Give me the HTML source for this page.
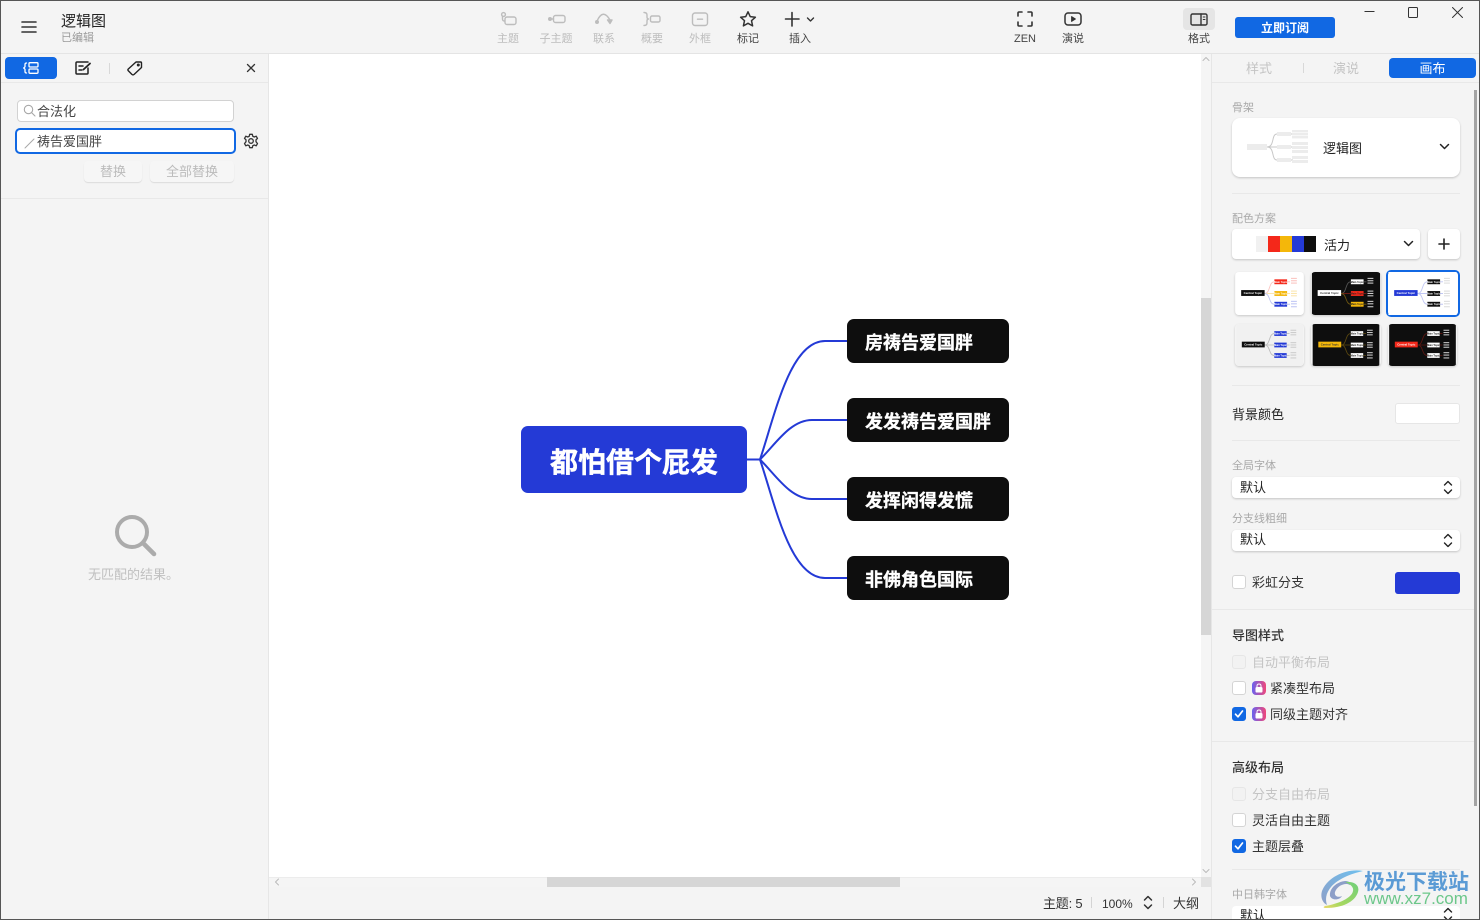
<!DOCTYPE html>
<html lang="zh"><head><meta charset="utf-8"><title>逻辑图</title>
<style>
html,body{margin:0;padding:0;width:1480px;height:920px;overflow:hidden;background:#f4f4f4}
body{position:relative;font-family:"Liberation Sans","Noto Sans CJK SC",sans-serif;color:#222}
.a,.t,svg.i{position:absolute}
.t{white-space:nowrap;line-height:16px;font-size:13px;margin-top:1px}
.tb{font-size:11px;color:#bdbdbd;width:50px;text-align:center;top:30px}
.dk{color:#444}
.lb{font-size:11px;color:#a8a8a8}
.hd{font-weight:500;color:#333}
.card{position:absolute;background:#fff;border-radius:4px;box-shadow:0 1px 2px rgba(0,0,0,.2)}
.ln{position:absolute;height:1px;background:#e8e8e8}
.cb{position:absolute;width:12px;height:12px;background:#fff;border:1px solid #d4d4d4;border-radius:3px}
.cb.off{background:#f2f2f2;border-color:#e6e6e6}
.cb.on{background:#1168e3;border-color:#1168e3}
.dis{color:#c4c4c4}
.node{position:absolute;background:#0e0e0e;color:#fff;border-radius:7px;height:44px;width:162px;font-weight:700;font-size:18px;line-height:48px;text-indent:18px;white-space:nowrap;overflow:hidden;-webkit-text-stroke:.3px #fff}
svg.i{fill:none;stroke-linecap:round;stroke-linejoin:round}
.g{stroke:#bdbdbd;stroke-width:1.4}
.d{stroke:#333;stroke-width:1.5}
.th{position:absolute;border-radius:4px;box-shadow:0 1px 2px rgba(0,0,0,.18);overflow:hidden}
.bl{filter:blur(.3px)}
</style></head><body>

<svg width="0" height="0" style="position:absolute">
<symbol id="tm" viewBox="0 0 70 44">
<rect width="70" height="44" style="fill:var(--bg)"/>
<g fill="none" stroke-width=".9" style="stroke:var(--l1)"><path d="M30 22C36 22 34 10 40 10M53 10H56"/></g>
<g fill="none" stroke-width=".9" style="stroke:var(--l2)"><path d="M30 22H40M53 22H56"/></g>
<g fill="none" stroke-width=".9" style="stroke:var(--l3)"><path d="M30 22C36 22 34 33 40 33M53 33H56"/></g>
<rect x="6" y="18.5" width="24" height="6" style="fill:var(--c)"/>
<text x="18" y="22.7" font-size="3" text-anchor="middle" font-family="Liberation Sans" font-weight="700" style="fill:var(--ct)">Central Topic</text>
<rect x="40" y="7.5" width="13" height="5" style="fill:var(--m1)"/>
<rect x="40" y="19.5" width="13" height="5" style="fill:var(--m2)"/>
<rect x="40" y="30.5" width="13" height="5" style="fill:var(--m3)"/>
<text x="46.5" y="11" font-size="2.6" text-anchor="middle" font-family="Liberation Sans" font-weight="700" style="fill:var(--mt)">Main Topic</text>
<text x="46.5" y="23" font-size="2.6" text-anchor="middle" font-family="Liberation Sans" font-weight="700" style="fill:var(--mt)">Main Topic</text>
<text x="46.5" y="34" font-size="2.6" text-anchor="middle" font-family="Liberation Sans" font-weight="700" style="fill:var(--mt)">Main Topic</text>
<g style="fill:var(--s1)"><rect x="57" y="6" width="6" height="1.1"/><rect x="57" y="8.4" width="6" height="1.1"/><rect x="57" y="10.8" width="6" height="1.1"/></g>
<g style="fill:var(--s2)"><rect x="57" y="19" width="6" height="1.1"/><rect x="57" y="21.4" width="6" height="1.1"/><rect x="57" y="23.8" width="6" height="1.1"/></g>
<g style="fill:var(--s3)"><rect x="57" y="29.5" width="6" height="1.1"/><rect x="57" y="32" width="6" height="1.1"/><rect x="57" y="35" width="6" height="1.1"/></g>
</symbol>
<linearGradient id="wb" x1="1" y1="0" x2="0" y2="1"><stop offset="0" stop-color="#6fc0ee"/><stop offset="1" stop-color="#8d9fc8"/></linearGradient>
<linearGradient id="wg" x1="1" y1="0" x2="0" y2="1"><stop offset="0" stop-color="#6fcf7a"/><stop offset=".7" stop-color="#a8d860"/><stop offset="1" stop-color="#ecd96a"/></linearGradient>
</svg>

<!-- top bar -->
<div class="a" style="left:0;top:53px;width:1480px;height:1px;background:#e4e4e4"></div>
<svg class="i" style="left:21px;top:20px" width="16" height="14" stroke="#333" stroke-width="1.6"><path d="M1 2H15M1 7H15M1 12H15"/></svg>
<div class="t" style="left:61px;top:12px;font-size:15px;line-height:18px;color:#222">逻辑图</div>
<div class="t" style="left:61px;top:29px;font-size:11px;color:#9a9a9a">已编辑</div>

<svg class="i g" style="left:498px;top:10px" width="20" height="18"><circle cx="5.5" cy="4.5" r="1.9"/><path d="M4.5 6.5V9Q4.5 11 6.5 11"/><rect x="7" y="7" width="11" height="7.5" rx="2"/></svg>
<div class="t tb" style="left:483px">主题</div>
<svg class="i g" style="left:546px;top:10px" width="22" height="18"><circle cx="4" cy="9" r="1.3" fill="#bdbdbd"/><path d="M5 9H7.5"/><rect x="7.5" y="5.5" width="11.5" height="7" rx="2"/></svg>
<div class="t tb" style="left:531px">子主题</div>
<svg class="i g" style="left:594px;top:10px" width="20" height="18"><circle cx="3" cy="12" r="1.3" fill="#bdbdbd"/><path d="M3 11Q9 -2 16 10"/><path d="M13.5 10H18L16 13.5Z" fill="#bdbdbd"/></svg>
<div class="t tb" style="left:579px">联系</div>
<svg class="i g" style="left:642px;top:10px" width="20" height="18"><path d="M2 2.5Q5 2.5 5 5V7Q5 9 6.5 9Q5 9 5 11V13Q5 15.5 2 15.5"/><rect x="8.5" y="6" width="9.5" height="6" rx="1.5"/></svg>
<div class="t tb" style="left:627px">概要</div>
<svg class="i g" style="left:691px;top:10px" width="18" height="18"><rect x="1.5" y="3" width="15" height="12.5" rx="2.5"/><path d="M6.5 9.2H11.5"/></svg>
<div class="t tb" style="left:675px">外框</div>
<svg class="i" style="left:739px;top:10px" width="18" height="18" stroke="#333" stroke-width="1.5"><path d="M9 1.8L11.2 6.6L16.4 7.2L12.5 10.7L13.6 15.9L9 13.3L4.4 15.9L5.5 10.7L1.6 7.2L6.8 6.6Z"/></svg>
<div class="t tb dk" style="left:723px">标记</div>
<svg class="i" style="left:784px;top:11px" width="32" height="16" stroke="#333" stroke-width="1.6"><path d="M8 1.5V15M1.5 8H15"/><path d="M23.5 7L26.5 10L29.5 7" stroke-width="1.4"/></svg>
<div class="t tb dk" style="left:775px">插入</div>

<svg class="i" style="left:1016px;top:10px" width="18" height="18" stroke="#333" stroke-width="1.6"><path d="M2 6V3Q2 2 3 2H6M12 2H15Q16 2 16 3V6M16 12V15Q16 16 15 16H12M6 16H3Q2 16 2 15V12"/></svg>
<div class="t tb dk" style="left:1000px">ZEN</div>
<svg class="i" style="left:1064px;top:11px" width="18" height="16" stroke="#333" stroke-width="1.5"><rect x="1" y="2" width="16" height="12" rx="3"/><path d="M7.5 5.5L11.5 8L7.5 10.5Z" fill="#333" stroke-width=".8"/></svg>
<div class="t tb dk" style="left:1048px">演说</div>
<div class="a" style="left:1183px;top:8px;width:32px;height:22px;background:#e5e5e5;border-radius:4px"></div>
<svg class="i" style="left:1190px;top:13px" width="18" height="13" stroke="#333" stroke-width="1.4"><rect x="1" y="1" width="16" height="11" rx="1.5"/><path d="M11 1V12"/><path d="M13.2 4H15M13.2 6.5H15" stroke-width="1"/></svg>
<div class="t tb dk" style="left:1174px">格式</div>
<div class="a" style="left:1235px;top:17px;width:100px;height:21px;background:#1168e3;border-radius:3px;color:#fff;font-size:12px;font-weight:700;text-align:center;line-height:23px;overflow:hidden">立即订阅</div>
<svg class="i" style="left:1360px;top:4px" width="110" height="16" stroke="#333" stroke-width="1"><path d="M4.5 7.5H14.5" stroke-linecap="butt"/><rect x="48.5" y="3.5" width="9" height="10" rx="1"/><path d="M92.5 3.5L102.5 13.5M102.5 3.5L92.5 13.5"/></svg>

<!-- left panel -->
<div class="a" style="left:268px;top:54px;width:1px;height:866px;background:#e6e6e6"></div>
<div class="ln" style="left:0;top:82px;width:268px"></div>
<div class="a" style="left:5px;top:57px;width:52px;height:22px;background:#1168e3;border-radius:4px"></div>
<svg class="i" style="left:22px;top:60px" width="18" height="16" stroke="#fff" stroke-width="1.3"><path d="M4.5 3Q3 3 3 4.5V6.8L1.7 8L3 9.2V11.5Q3 13 4.5 13"/><rect x="7" y="2.7" width="9" height="4.3" rx="1"/><rect x="7" y="9" width="9" height="4.3" rx="1"/></svg>
<svg class="i" style="left:74px;top:60px" width="18" height="16" stroke="#222" stroke-width="1.5"><path d="M14 8V13Q14 14 13 14H3Q2 14 2 13V3Q2 2 3 2H14"/><path d="M5 6H9M5 10H8"/><path d="M9.5 9.5L16 3.5" stroke-width="1.8"/></svg>
<div class="a" style="left:109px;top:63px;width:1px;height:11px;background:#d8d8d8"></div>
<svg class="i" style="left:126px;top:60px" width="17" height="16" stroke="#222" stroke-width="1.4"><path d="M10 2H14.5Q15.5 2 15.5 3V7.5L8 14.5Q7 15.3 6 14.5L2.3 10.8Q1.5 9.8 2.3 9Z"/><circle cx="12.3" cy="5" r=".8"/></svg>
<svg class="i" style="left:245px;top:62px" width="12" height="12" stroke="#333" stroke-width="1.3"><path d="M2.5 2.5L9.5 9.5M9.5 2.5L2.5 9.5"/></svg>

<div class="a" style="left:17px;top:100px;width:215px;height:20px;background:#fff;border:1px solid #d2d2d2;border-radius:4px"></div>
<svg class="i" style="left:23px;top:104px" width="14" height="14" stroke="#a8a8a8" stroke-width="1.1"><circle cx="5.5" cy="5.5" r="4.2"/><path d="M8.5 8.5L12 12"/></svg>
<div class="t" style="left:37px;top:103px;color:#444">合法化</div>
<div class="a" style="left:15px;top:128px;width:217px;height:22px;background:#fff;border:2px solid #1168e3;border-radius:5px"></div>
<svg class="i" style="left:24px;top:137px" width="12" height="12" stroke="#a8a8a8" stroke-width="1"><path d="M1 11L10 2"/></svg>
<div class="t" style="left:37px;top:133px;color:#444">祷告爱国胖</div>
<svg class="i" style="left:243px;top:133px" width="16" height="16" viewBox="0 0 16 16" stroke="#333" stroke-width="1.3"><path d="M6.7 1.3H9.3L9.8 3.3L11.3 4L13.2 3.2L14.5 5.4L13 6.8V8.7L14.5 10.6L13.2 12.8L11.3 12L9.8 12.7L9.3 14.7H6.7L6.2 12.7L4.7 12L2.8 12.8L1.5 10.6L3 8.7V6.8L1.5 5.4L2.8 3.2L4.7 4L6.2 3.3Z"/><circle cx="8" cy="8" r="2.3"/></svg>
<div class="card" style="left:84px;top:161px;width:58px;height:21px;background:#f6f6f6;box-shadow:0 1px 1px rgba(0,0,0,.1);color:#bbb;font-size:13px;text-align:center;line-height:21px">替换</div>
<div class="card" style="left:150px;top:161px;width:84px;height:21px;background:#f6f6f6;box-shadow:0 1px 1px rgba(0,0,0,.1);color:#bbb;font-size:13px;text-align:center;line-height:21px">全部替换</div>
<div class="ln" style="left:0;top:198px;width:268px"></div>
<svg class="i" style="left:113px;top:513px" width="44" height="44" stroke="#ababab" stroke-width="4"><circle cx="19" cy="19" r="15"/><path d="M30 30L41 41" stroke-width="4.6"/></svg>
<div class="t" style="left:88px;top:566px;font-size:13px;color:#c0c0c0">无匹配的结果。</div>

<!-- canvas -->
<div class="a" style="left:269px;top:54px;width:932px;height:823px;background:#fff"></div>
<svg class="a" style="left:269px;top:54px" width="932" height="823" fill="none" stroke="#243ad6" stroke-width="2">
<path d="M478 405.5H491M491 405.5C506 361 521 287 556 287H578"/>
<path d="M491 405.5C506 391 521 366 543 366H578"/>
<path d="M491 405.5C506 420 521 445 543 445H578"/>
<path d="M491 405.5C506 450 521 524 556 524H578"/>
</svg>
<div class="a" style="left:521px;top:426px;width:226px;height:67px;background:#243ad6;border-radius:7px;color:#fff;font-size:28px;font-weight:700;line-height:74px;text-align:center;white-space:nowrap;overflow:hidden;-webkit-text-stroke:.4px #fff">都怕借个屁发</div>
<div class="node" style="left:847px;top:319px">房祷告爱国胖</div>
<div class="node" style="left:847px;top:398px">发发祷告爱国胖</div>
<div class="node" style="left:847px;top:477px">发挥闲得发慌</div>
<div class="node" style="left:847px;top:556px">非佛角色国际</div>

<!-- scrollbars -->
<div class="a" style="left:1201px;top:54px;width:10px;height:833px;background:#f5f5f5"></div>
<div class="a" style="left:1201px;top:298px;width:10px;height:337px;background:#d6d6d6"></div>
<div class="a" style="left:269px;top:877px;width:932px;height:10px;background:#f5f5f5;box-shadow:inset 0 1px 0 #ececec"></div>
<div class="a" style="left:547px;top:877px;width:353px;height:10px;background:#d6d6d6"></div>
<div class="a" style="left:1201px;top:877px;width:10px;height:10px;background:#e2e2e2"></div>
<svg class="i" style="left:1202px;top:56px" width="8" height="6" stroke="#bbb" stroke-width="1"><path d="M1 4.5L4 1.5L7 4.5"/></svg>
<svg class="i" style="left:1202px;top:868px" width="8" height="6" stroke="#bbb" stroke-width="1"><path d="M1 1.5L4 4.5L7 1.5"/></svg>
<svg class="i" style="left:274px;top:878px" width="6" height="8" stroke="#bbb" stroke-width="1"><path d="M4.5 1L1.5 4L4.5 7"/></svg>
<svg class="i" style="left:1191px;top:878px" width="6" height="8" stroke="#bbb" stroke-width="1"><path d="M1.5 1L4.5 4L1.5 7"/></svg>

<!-- status bar -->
<div class="t" style="left:1043px;top:895px;font-size:13px;letter-spacing:-.2px;color:#333">主题: 5</div>
<div class="a" style="left:1091px;top:897px;width:1px;height:11px;background:#d4d4d4"></div>
<div class="t" style="left:1102px;top:895px;font-size:12px;color:#333">100%</div>
<svg class="i" style="left:1143px;top:894px" width="10" height="17" stroke="#333" stroke-width="1.5"><path d="M1.5 6L5 2.5L8.5 6M1.5 11L5 14.5L8.5 11"/></svg>
<div class="a" style="left:1163px;top:897px;width:1px;height:11px;background:#d4d4d4"></div>
<div class="t" style="left:1173px;top:895px;color:#333">大纲</div>

<!-- right panel -->
<div class="a" style="left:1211px;top:54px;width:1px;height:866px;background:#e6e6e6"></div>
<div class="ln" style="left:1212px;top:82px;width:268px"></div>
<div class="t" style="left:1246px;top:60px;color:#c4c4c4">样式</div>
<div class="a" style="left:1303px;top:63px;width:1px;height:10px;background:#d8d8d8"></div>
<div class="t" style="left:1333px;top:60px;color:#c4c4c4">演说</div>
<div class="a" style="left:1389px;top:58px;width:87px;height:20px;background:#1168e3;border-radius:4px;color:#fff;font-size:13px;text-align:center;line-height:22px;overflow:hidden">画布</div>
<div class="a" style="left:1474px;top:90px;width:3px;height:716px;background:#a4a4a4"></div>

<div class="t lb" style="left:1232px;top:99px">骨架</div>
<div class="card" style="left:1232px;top:118px;width:228px;height:59px;border-radius:8px"></div>
<svg class="a bl" style="left:1247px;top:130px" width="62" height="34" fill="none" stroke="#c8c8c8" stroke-width="1">
<path d="M20 17C28 17 24 4 30 4M20 17H30M20 17C28 17 24 30 30 30"/>
<path d="M44 4H46M44 17H46M44 30H46"/>
<g fill="#ececec" stroke="none"><rect x="0" y="14" width="20" height="6"/><rect x="30" y="2" width="14" height="4"/><rect x="30" y="15" width="14" height="4"/><rect x="30" y="28" width="14" height="4"/><rect x="45" y="0" width="16" height="2.4"/><rect x="45" y="3" width="16" height="2.4"/><rect x="45" y="6" width="16" height="2.4"/><rect x="45" y="12" width="16" height="3"/><rect x="45" y="16" width="16" height="3"/><rect x="45" y="20" width="16" height="3"/><rect x="45" y="26" width="16" height="3"/><rect x="45" y="30" width="16" height="3"/></g>
</svg>
<div class="t" style="left:1323px;top:140px;color:#222">逻辑图</div>
<svg class="i" style="left:1439px;top:143px" width="11" height="8" stroke="#222" stroke-width="1.5"><path d="M1.5 1.5L5.5 5.5L9.5 1.5"/></svg>
<div class="ln" style="left:1232px;top:193px;width:228px"></div>

<div class="t lb" style="left:1232px;top:210px">配色方案</div>
<div class="card" style="left:1232px;top:229px;width:188px;height:30px"></div>
<div class="a" style="left:1256px;top:236px;width:12px;height:16px;background:#f1f1f1"></div>
<div class="a" style="left:1268px;top:236px;width:12px;height:16px;background:#f4281a"></div>
<div class="a" style="left:1280px;top:236px;width:12px;height:16px;background:#f4b70a"></div>
<div class="a" style="left:1292px;top:236px;width:12px;height:16px;background:#243ad6"></div>
<div class="a" style="left:1304px;top:236px;width:12px;height:16px;background:#0e0e0e"></div>
<div class="t" style="left:1324px;top:237px;color:#222">活力</div>
<svg class="i" style="left:1403px;top:240px" width="11" height="8" stroke="#222" stroke-width="1.5"><path d="M1.5 1.5L5.5 5.5L9.5 1.5"/></svg>
<div class="card" style="left:1428px;top:229px;width:32px;height:30px"></div>
<svg class="i" style="left:1438px;top:238px" width="12" height="12" stroke="#222" stroke-width="1.6"><path d="M6 1V11M1 6H11"/></svg>

<svg class="th bl" style="left:1235px;top:272px;--bg:#fff;--c:#0e0e0e;--ct:#fff;--m1:#f4281a;--m2:#f4b70a;--m3:#243ad6;--mt:#fff;--l1:#fbc4c0;--l2:#fbe6ae;--l3:#c0c6f4;--s1:#fbc4c0;--s2:#fbe6ae;--s3:#c0c6f4" width="69" height="43" viewBox="0 0 70 44"><use href="#tm"/></svg>
<svg class="th bl" style="left:1311px;top:272px;--bg:#0e0e0e;--c:#fff;--ct:#333;--m1:#fff;--m2:#f4281a;--m3:#f4b70a;--mt:#222;--l1:#555;--l2:#6a1a14;--l3:#6a5310;--s1:#ccc;--s2:#ccc;--s3:#ccc" width="70" height="43" viewBox="0 0 70 44"><use href="#tm"/></svg>
<div class="a" style="left:1386px;top:270px;width:70px;height:43px;border:2px solid #1168e3;border-radius:5px;background:#fff"></div>
<svg class="a bl" style="left:1388px;top:272px;--bg:#fff;--c:#243ad6;--ct:#fff;--m1:#0e0e0e;--m2:#0e0e0e;--m3:#0e0e0e;--mt:#fff;--l1:#c0c6f4;--l2:#c0c6f4;--l3:#c0c6f4;--s1:#ddd;--s2:#ddd;--s3:#ddd" width="69" height="43" viewBox="0 0 70 44"><use href="#tm"/></svg>
<svg class="th bl" style="left:1235px;top:324px;--bg:#f1f1f1;--c:#0e0e0e;--ct:#fff;--m1:#243ad6;--m2:#243ad6;--m3:#243ad6;--mt:#fff;--l1:#bbb;--l2:#bbb;--l3:#bbb;--s1:#ccc;--s2:#ccc;--s3:#ccc" width="69" height="42" viewBox="0 0 70 44"><use href="#tm"/></svg>
<svg class="th bl" style="left:1311px;top:324px;--bg:#0e0e0e;--c:#f4b70a;--ct:#333;--m1:#fff;--m2:#fff;--m3:#fff;--mt:#222;--l1:#5a4710;--l2:#5a4710;--l3:#5a4710;--s1:#ccc;--s2:#ccc;--s3:#ccc" width="70" height="42" viewBox="0 0 70 44"><use href="#tm"/></svg>
<svg class="th bl" style="left:1388px;top:324px;--bg:#0e0e0e;--c:#f4281a;--ct:#fff;--m1:#fff;--m2:#fff;--m3:#fff;--mt:#222;--l1:#5c1712;--l2:#5c1712;--l3:#5c1712;--s1:#ccc;--s2:#ccc;--s3:#ccc" width="69" height="42" viewBox="0 0 70 44"><use href="#tm"/></svg>

<div class="ln" style="left:1232px;top:385px;width:228px"></div>
<div class="t" style="left:1232px;top:406px;color:#222">背景颜色</div>
<div class="a" style="left:1395px;top:403px;width:63px;height:19px;background:#fff;border:1px solid #e6e6e6;border-radius:3px"></div>
<div class="ln" style="left:1232px;top:440px;width:228px"></div>

<div class="t lb" style="left:1232px;top:457px">全局字体</div>
<div class="card" style="left:1232px;top:477px;width:228px;height:21px"></div>
<div class="t" style="left:1240px;top:479px;color:#222">默认</div>
<svg class="i" style="left:1443px;top:479px" width="10" height="17" stroke="#222" stroke-width="1.4"><path d="M1.5 6L5 2.5L8.5 6M1.5 11L5 14.5L8.5 11"/></svg>
<div class="t lb" style="left:1232px;top:510px">分支线粗细</div>
<div class="card" style="left:1232px;top:530px;width:228px;height:21px"></div>
<div class="t" style="left:1240px;top:531px;color:#222">默认</div>
<svg class="i" style="left:1443px;top:532px" width="10" height="17" stroke="#222" stroke-width="1.4"><path d="M1.5 6L5 2.5L8.5 6M1.5 11L5 14.5L8.5 11"/></svg>
<div class="cb" style="left:1232px;top:575px"></div>
<div class="t" style="left:1252px;top:574px;color:#333">彩虹分支</div>
<div class="a" style="left:1395px;top:572px;width:65px;height:22px;background:#243ad6;border-radius:3px"></div>
<div class="ln" style="left:1212px;top:609px;width:262px"></div>

<div class="t hd" style="left:1232px;top:627px">导图样式</div>
<div class="cb off" style="left:1232px;top:655px"></div>
<div class="t dis" style="left:1252px;top:654px">自动平衡布局</div>
<div class="cb" style="left:1232px;top:681px"></div>
<div class="a" style="left:1252px;top:681px;width:14px;height:14px;border-radius:4px;background:linear-gradient(90deg,#6a62ee,#f0487a)"></div>
<svg class="i" style="left:1255px;top:683px" width="8" height="10" stroke="#fff" stroke-width="1"><path d="M2 4.5V3Q2 1 4 1Q6 1 6 3V4.5"/><rect x="1" y="4.5" width="6" height="4.5" rx=".8" fill="#fff"/></svg>
<div class="t" style="left:1270px;top:680px;color:#333">紧凑型布局</div>
<div class="cb on" style="left:1232px;top:707px"></div>
<svg class="i" style="left:1234px;top:709px" width="10" height="10" stroke="#fff" stroke-width="1.7"><path d="M1.5 5.2L4 7.8L8.5 2"/></svg>
<div class="a" style="left:1252px;top:707px;width:14px;height:14px;border-radius:4px;background:linear-gradient(90deg,#6a62ee,#f0487a)"></div>
<svg class="i" style="left:1255px;top:709px" width="8" height="10" stroke="#fff" stroke-width="1"><path d="M2 4.5V3Q2 1 4 1Q6 1 6 3V4.5"/><rect x="1" y="4.5" width="6" height="4.5" rx=".8" fill="#fff"/></svg>
<div class="t" style="left:1270px;top:706px;color:#333">同级主题对齐</div>
<div class="ln" style="left:1212px;top:741px;width:262px"></div>

<div class="t hd" style="left:1232px;top:759px">高级布局</div>
<div class="cb off" style="left:1232px;top:787px"></div>
<div class="t dis" style="left:1252px;top:786px">分支自由布局</div>
<div class="cb" style="left:1232px;top:813px"></div>
<div class="t" style="left:1252px;top:812px;color:#333">灵活自由主题</div>
<div class="cb on" style="left:1232px;top:839px"></div>
<svg class="i" style="left:1234px;top:841px" width="10" height="10" stroke="#fff" stroke-width="1.7"><path d="M1.5 5.2L4 7.8L8.5 2"/></svg>
<div class="t" style="left:1252px;top:838px;color:#333">主题层叠</div>
<div class="ln" style="left:1232px;top:869px;width:228px"></div>
<div class="t lb" style="left:1232px;top:886px">中日韩字体</div>
<div class="a" style="left:1232px;top:906px;width:228px;height:14px;background:#fff;border-radius:4px 4px 0 0"></div>
<div class="t" style="left:1240px;top:907px;color:#222">默认</div>
<svg class="i" style="left:1443px;top:906px" width="10" height="14" stroke="#222" stroke-width="1.4"><path d="M1.5 6L5 2.5L8.5 6M1.5 11L5 14.5L8.5 11"/></svg>

<!-- watermark -->
<svg class="a" style="left:1318px;top:866px" width="48" height="46">
<path d="M45 5C30 2 10 10 4 25C2 32 5 37 9 39C7 33 8 27 13 21C20 13 32 8 45 5Z" fill="url(#wb)"/>
<path d="M12 30C11 23 18 16 27 15C31 15 33 17 32 19C27 16 19 20 17 26C16 30 20 32 24 30C22 34 14 35 12 30Z" fill="#8d9fc8"/>
<path d="M27 16C36 15 42 19 40 26C37 36 24 42 8 42C5 42 5 41 7 40C20 38 34 32 35 25C36 21 32 18 27 16Z" fill="url(#wg)"/>
</svg>
<div class="t" style="left:1364px;top:870px;font-size:21px;line-height:24px;font-weight:700;color:#5b9bd5">极光下载站</div>
<div class="t" style="left:1364px;top:888px;font-size:17px;line-height:20px;color:#6cc78a">www.xz7.com</div>

<div class="a" style="left:0;top:0;width:1478px;height:918px;border:1px solid #555;pointer-events:none"></div>
</body></html>
